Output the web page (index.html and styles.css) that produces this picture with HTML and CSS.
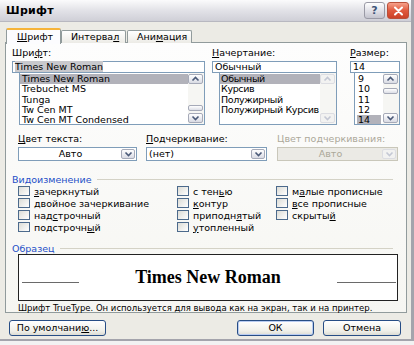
FILE: index.html
```html
<!DOCTYPE html>
<html lang="ru">

<head>
  <meta charset="UTF-8">
  <meta name="viewport" content="width=device-width, initial-scale=1.0">
  <title>Шрифт</title>
  <link rel="stylesheet" href="styles.css">
</head>

<body>
  <div class="window">
    <div class="titlebar">
      <span class="title">Шрифт</span>
      <div class="caption-btns">
        <span class="cbtn help">?</span>
        <span class="cbtn close">
          <svg width="11" height="10" viewBox="0 0 11 10"><path d="M2 1.5 L9 8.5 M9 1.5 L2 8.5" stroke="#fff" stroke-width="2" stroke-linecap="round"/></svg>
        </span>
      </div>
    </div>

    <div class="client">
      <div class="tabs">
        <span class="tab active"><u>Ш</u>рифт</span>
        <span class="tab">Интерва<u>л</u></span>
        <span class="tab">Ани<u>м</u>ация</span>
      </div>

      <div class="panel">
        <!-- шрифт / начертание / размер -->
        <div class="pickers">
          <div class="picker col-font">
            <div class="caption">Шри<u>ф</u>т:</div>
            <div class="edit"><span class="sel">Times New Roman</span></div>
            <div class="list">
              <ul class="items">
                <li class="on">Times New Roman</li>
                <li>Trebuchet MS</li>
                <li>Tunga</li>
                <li>Tw Cen MT</li>
                <li>Tw Cen MT Condensed</li>
              </ul>
              <div class="scroll">
                <span class="sbtn"><svg width="9" height="6" viewBox="0 0 9 6"><path d="M1.5 4.5 L4.5 1.5 L7.5 4.5" fill="none" stroke="#4b5a78" stroke-width="1.6"/></svg></span>
                <span class="track"><span class="thumb thumb-low"></span></span>
                <span class="sbtn"><svg width="9" height="6" viewBox="0 0 9 6"><path d="M1.5 1.5 L4.5 4.5 L7.5 1.5" fill="none" stroke="#4b5a78" stroke-width="1.6"/></svg></span>
              </div>
            </div>
          </div>

          <div class="picker col-style">
            <div class="caption"><u>Н</u>ачертание:</div>
            <div class="edit">Обычный</div>
            <div class="list">
              <ul class="items">
                <li class="on">Обычный</li>
                <li>Курсив</li>
                <li>Полужирный</li>
                <li>Полужирный Курсив</li>
              </ul>
              <div class="scroll off">
                <span class="sbtn"><svg width="9" height="6" viewBox="0 0 9 6"><path d="M1.5 4.5 L4.5 1.5 L7.5 4.5" fill="none" stroke="#c4c8d4" stroke-width="1.6"/></svg></span>
                <span class="track"></span>
                <span class="sbtn"><svg width="9" height="6" viewBox="0 0 9 6"><path d="M1.5 1.5 L4.5 4.5 L7.5 1.5" fill="none" stroke="#c4c8d4" stroke-width="1.6"/></svg></span>
              </div>
            </div>
          </div>

          <div class="picker col-size">
            <div class="caption"><u>Р</u>азмер:</div>
            <div class="edit">14</div>
            <div class="list">
              <ul class="items">
                <li>9</li>
                <li>10</li>
                <li>11</li>
                <li>12</li>
                <li><span class="on">14</span></li>
              </ul>
              <div class="scroll">
                <span class="sbtn"><svg width="9" height="6" viewBox="0 0 9 6"><path d="M1.5 4.5 L4.5 1.5 L7.5 4.5" fill="none" stroke="#4b5a78" stroke-width="1.6"/></svg></span>
                <span class="track"><span class="thumb thumb-high"></span></span>
                <span class="sbtn"><svg width="9" height="6" viewBox="0 0 9 6"><path d="M1.5 1.5 L4.5 4.5 L7.5 1.5" fill="none" stroke="#4b5a78" stroke-width="1.6"/></svg></span>
              </div>
            </div>
          </div>
        </div>

        <!-- цвет / подчеркивание -->
        <div class="combos">
          <div class="field f-color">
            <div class="caption"><u>Ц</u>вет текста:</div>
            <div class="combo"><span class="value center">Авто</span><span class="drop"><svg width="9" height="6" viewBox="0 0 9 6"><path d="M1.5 1.5 L4.5 4.5 L7.5 1.5" fill="none" stroke="#4b5a78" stroke-width="1.6"/></svg></span></div>
          </div>
          <div class="field f-under">
            <div class="caption"><u>П</u>одчеркивание:</div>
            <div class="combo"><span class="value">(нет)</span><span class="drop"><svg width="9" height="6" viewBox="0 0 9 6"><path d="M1.5 1.5 L4.5 4.5 L7.5 1.5" fill="none" stroke="#4b5a78" stroke-width="1.6"/></svg></span></div>
          </div>
          <div class="field f-ucolor disabled">
            <div class="caption">Цвет подчеркивания:</div>
            <div class="combo"><span class="value center">Авто</span><span class="drop"><svg width="9" height="6" viewBox="0 0 9 6"><path d="M1.5 1.5 L4.5 4.5 L7.5 1.5" fill="none" stroke="#c4c8d4" stroke-width="1.6"/></svg></span></div>
          </div>
        </div>

        <!-- видоизменение -->
        <div class="group-title"><span>Видоизменение</span></div>
        <div class="effects">
          <label class="check"><span class="box"></span><span><u>з</u>ачеркнутый</span></label>
          <label class="check"><span class="box"></span><span><u>д</u>войное зачеркивание</span></label>
          <label class="check"><span class="box"></span><span>над<u>с</u>трочный</span></label>
          <label class="check"><span class="box"></span><span>подстрочн<u>ы</u>й</span></label>
          <label class="check"><span class="box"></span><span>с тен<u>ь</u>ю</span></label>
          <label class="check"><span class="box"></span><span><u>к</u>онтур</span></label>
          <label class="check"><span class="box"></span><span>приподн<u>я</u>тый</span></label>
          <label class="check"><span class="box"></span><span><u>у</u>топленный</span></label>
          <label class="check"><span class="box"></span><span>м<u>а</u>лые прописные</span></label>
          <label class="check"><span class="box"></span><span><u>в</u>се прописные</span></label>
          <label class="check"><span class="box"></span><span>скрыты<u>й</u></span></label>
        </div>

        <!-- образец -->
        <div class="group-title sample-title"><span>Образец</span></div>
        <div class="sample">
          <span class="rule left"></span>
          <span class="sample-text">Times New Roman</span>
          <span class="rule right"></span>
        </div>
        <p class="note">Шрифт TrueType. Он используется для вывода как на экран, так и на принтер.</p>
      </div>

      <div class="buttons">
        <button class="btn btn-default" type="button">По умолчани<u>ю</u>...</button>
        <button class="btn btn-ok" type="button">ОК</button>
        <button class="btn btn-cancel" type="button">Отмена</button>
      </div>
    </div>
  </div>
</body>

</html>
```

FILE: styles.css
```css
* {
  box-sizing: border-box;
}

body {
  margin: 0;
  padding: 0;
  background: #f2f2f2;
  font-family: "DejaVu Sans", Verdana, sans-serif;
  font-size: 9.5px;
  color: #000;
}

u {
  text-underline-offset: 1px;
}

.window {
  width: 414px;
  height: 341px;
  background: #ecebe5;
  border-right: 3px solid #a4a4ac;
  border-bottom: 2px solid #a4a4ac;
}

/* заголовок окна */
.titlebar {
  height: 22px;
  display: flex;
  align-items: center;
  justify-content: space-between;
  padding: 0 2px 0 6px;
  background: linear-gradient(#fbfbfc 0%, #e4e4e9 45%, #cfcfd7 100%);
  border-bottom: 1px solid #b8b8c0;
}

.title {
  font-size: 11px;
  font-weight: bold;
  letter-spacing: 0.3px;
}

.caption-btns {
  display: flex;
  gap: 2px;
}

.cbtn {
  display: flex;
  align-items: center;
  justify-content: center;
  width: 21px;
  height: 17px;
  border-radius: 3px;
}

.help {
  border: 1px solid #9a9aa6;
  background: linear-gradient(#ffffff, #dcdce4 60%, #c4c4ce);
  color: #3f5578;
  font-weight: bold;
  font-size: 11px;
}

.close {
  width: 22px;
  border: 1px solid #b9503a;
  background: linear-gradient(#f6a08a, #e05a3e 50%, #cc4228);
}

/* вкладки */
.client {
  padding: 6px 4px 0 5px;
}

.tabs {
  display: flex;
  align-items: flex-end;
  height: 15px;
  padding-left: 1px;
  position: relative;
  z-index: 1;
}

.tab {
  height: 13px;
  line-height: 12px;
  padding: 0 9px;
  border: 1px solid #919b9c;
  border-bottom: none;
  border-radius: 2px 2px 0 0;
  background: linear-gradient(#ffffff, #ecebe6);
}

.tab:nth-child(2) {
  width: 65px;
}

.tab:nth-child(3) {
  width: 65px;
  margin-left: 1px;
}

.tab.active {
  width: 55px;
  height: 16px;
  line-height: 14px;
  margin-bottom: -1px;
  padding-left: 10px;
  background: #fcfcfe;
  border-top: 2px solid #f6b43a;
}

.panel {
  height: 271px;
  margin-top: -1px;
  padding: 4px 0 0 6px;
  border: 1px solid #919b9c;
  background: linear-gradient(#fdfdfd, #f6f6f2);
}

/* списки */
.pickers {
  display: flex;
}

.col-font {
  width: 193px;
  margin-right: 7px;
}

.col-style {
  width: 125px;
  margin-right: 13px;
}

.col-size {
  width: 50px;
}

.caption {
  height: 14px;
  line-height: 12px;
  white-space: nowrap;
}

.edit {
  height: 12px;
  line-height: 10px;
  padding-left: 2px;
  border: 1px solid #7f9db9;
  background: #fff;
  white-space: nowrap;
}

.sel {
  background: #c8c8cc;
}

.list {
  display: flex;
  height: 52px;
  margin-left: 7px;
  border: 1px solid #7f9db9;
  border-top: none;
  background: #fff;
}

.col-size .list {
  margin-left: 4px;
}

.items {
  flex: 1;
  margin: 0;
  padding: 1px 0 0 0;
  list-style: none;
  overflow: hidden;
}

.items li {
  height: 10.3px;
  line-height: 10px;
  padding-left: 2px;
  white-space: nowrap;
}

.items .on {
  background: #b2b2ba;
}

.col-style .items li {
  padding-left: 1px;
  letter-spacing: -0.35px;
}

.col-size .items li {
  padding-left: 3px;
}

.col-size .items .on {
  display: inline-block;
  width: 24px;
  margin-left: -1px;
  padding-left: 1px;
}

.scroll {
  display: flex;
  flex-direction: column;
  width: 16px;
  flex-shrink: 0;
  padding: 1px 1px 1px 0;
  background: #f6f6f3;
}

.sbtn {
  display: flex;
  align-items: center;
  justify-content: center;
  height: 10px;
  border: 1px solid #a6aab8;
  border-radius: 2px;
  background: linear-gradient(#ffffff, #d9dbe4);
}

.scroll.off .sbtn {
  border-color: #dcdde2;
  background: #f2f2f1;
}

.track {
  flex: 1;
  position: relative;
}

.thumb {
  position: absolute;
  left: 0;
  right: 0;
  height: 6px;
  border: 1px solid #a6aab8;
  border-radius: 2px;
  background: linear-gradient(#ffffff, #dcdee6);
}

.thumb-low {
  top: 21px;
}

.thumb-high {
  top: 4px;
}

/* выпадающие списки */
.combos {
  display: flex;
  margin-top: 8px;
  padding-left: 6px;
}

.field {
  width: 119px;
}

.f-under {
  width: 121px;
  margin-left: 9px;
}

.f-ucolor {
  width: 121px;
  margin-left: 10px;
}

.combo {
  display: flex;
  height: 14px;
  border: 1px solid #7f9db9;
  background: #fff;
}

.value {
  flex: 1;
  line-height: 12px;
  padding-left: 2px;
}

.value.center {
  text-align: center;
}

.drop {
  display: flex;
  align-items: center;
  justify-content: center;
  width: 14px;
  margin: 1px;
  border: 1px solid #a6aab8;
  border-radius: 2px;
  background: linear-gradient(#ffffff, #d9dbe4);
}

.disabled .caption,
.disabled .value {
  color: #aca899;
}

.disabled .combo {
  border-color: #c9c7ba;
  background: #ebeae5;
}

.disabled .drop {
  border-color: #dcdde2;
  background: #f2f2f1;
}

/* группы */
.group-title {
  display: flex;
  align-items: center;
  gap: 5px;
  height: 12px;
  margin-top: 12px;
  margin-right: 13px;
  color: #1d4fc7;
}

.group-title::after {
  content: "";
  flex: 1;
  border-top: 1px solid #d4d2c6;
}

.effects {
  display: grid;
  grid-auto-flow: column;
  grid-template-rows: repeat(4, 12px);
  grid-template-columns: 159px 99px auto;
  padding-left: 6px;
}

.check {
  display: flex;
  align-items: center;
  gap: 4px;
  white-space: nowrap;
}

.box {
  width: 12px;
  height: 10px;
  border: 1px solid #4c6a8c;
  background: linear-gradient(135deg, #dcdcd6, #ffffff);
}

.sample-title {
  height: 11px;
  margin-top: 10px;
}

.sample {
  display: flex;
  align-items: center;
  justify-content: space-between;
  width: 380px;
  height: 47px;
  margin-left: 6px;
  padding: 0 1px 0 3px;
  border: 1px solid #222;
  background: #fff;
}

.rule {
  width: 57px;
  margin-top: 10px;
  border-top: 1px solid #6a6a6a;
}

.rule.right {
  width: 59px;
}

.sample-text {
  font-family: "Liberation Serif", "Times New Roman", serif;
  font-size: 18px;
  font-weight: bold;
}

.note {
  margin: 2px 0 0 6px;
  font-size: 8.5px;
  line-height: 10px;
  white-space: nowrap;
}

/* кнопки */
.buttons {
  display: flex;
  margin-top: 7px;
  padding-left: 4px;
}

.btn {
  height: 16px;
  padding: 0;
  border: 1px solid #274d85;
  border-radius: 3px;
  background: linear-gradient(#ffffff, #f0f0ea 70%, #dcdcd4);
  font-family: inherit;
  font-size: 9.5px;
  line-height: 12px;
  color: #000;
}

.btn-default {
  width: 97px;
}

.btn-ok {
  width: 77px;
  margin-left: auto;
  box-shadow: inset 0 0 0 1px #b8ccf2;
}

.btn-cancel {
  width: 78px;
  margin-left: 9px;
  margin-right: 6px;
}
```
